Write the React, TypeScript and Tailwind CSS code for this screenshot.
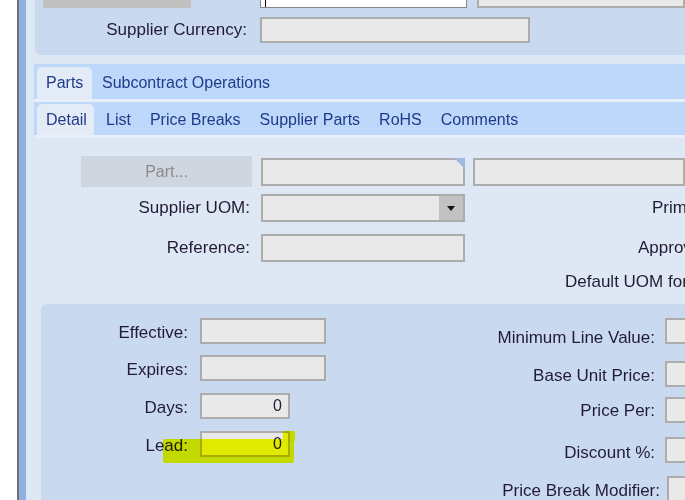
const field = 'border-2 border-[#acacac] bg-[#e9e9e9]';

const detailTabs = ['List', 'Price Breaks', 'Supplier Parts', 'RoHS', 'Comments'];

function Field({ w, value }: { w: string; value?: string }) {
  return (
    <div className={`flex h-[26px] shrink-0 items-center justify-end pr-[6px] text-[16px] ${w} ${field}`}>
      {value}
    </div>
  );
}

export default function App() {
  return (
    <div className="flex h-[500px] w-[685px] overflow-hidden bg-white font-['Liberation_Sans',Arial,sans-serif] text-[17px] text-[#221b36]">
      <div className="w-[17px] shrink-0 bg-white" />
      <div className="w-[2px] shrink-0 bg-[#6f6f6f]" />
      <div className="w-[7px] shrink-0 bg-[#8fb0e2]" />
      <div className="flex min-w-0 flex-1 flex-col overflow-hidden bg-[#dee8f5]">
        {/* supplier header panel */}
        <div className="ml-[9px] h-[55px] shrink-0 overflow-hidden rounded-bl-[6px] bg-[#c9daf0]">
          <div className="-mt-[20px] flex h-[28px] items-stretch">
            <div className="ml-[8px] w-[148px] shrink-0 bg-[#c0c0c0]" />
            <div className="ml-[69px] w-[207px] shrink-0 border border-[#8a8a8a] bg-white pl-[4px] pt-[16px]">
              <div className="h-[10px] w-[1px] bg-black" />
            </div>
            <div className={`ml-[10px] flex-1 ${field}`} />
          </div>
          <div className="mt-[9px] flex h-[26px] items-center">
            <span className="w-[212px] shrink-0 whitespace-nowrap text-right">Supplier Currency:</span>
            <div className={`ml-[13px] h-[26px] w-[270px] shrink-0 ${field}`} />
          </div>
        </div>

        {/* tab strips */}
        <div className="ml-[8px] mt-[9px] flex h-[35px] shrink-0 items-end bg-[#bdd8fb] text-[16px] text-[#1f3b8a]">
          <div className="ml-[3px] flex h-[32px] w-[55px] shrink-0 items-center rounded-t-[5px] bg-[#e3ebf6] pl-[9px]">Parts</div>
          <div className="ml-[10px] flex h-[32px] items-center whitespace-nowrap">Subcontract Operations</div>
        </div>
        <div className="ml-[8px] h-[3px] shrink-0 bg-[#e8eff8]" />
        <div className="ml-[8px] flex h-[33px] shrink-0 items-end bg-[#bdd8fb] text-[16px] text-[#1f3b8a]">
          <div className="ml-[3px] flex h-[31px] w-[57px] shrink-0 items-center rounded-t-[5px] bg-[#e3ebf6] pl-[9px]">Detail</div>
          <div className="ml-[12px] flex h-[31px] items-center gap-[19px] whitespace-nowrap">
            {detailTabs.map((t) => (
              <span key={t}>{t}</span>
            ))}
          </div>
        </div>
        <div className="ml-[8px] h-[3px] shrink-0 bg-[#e8eff8]" />

        {/* part rows */}
        <div className="mt-[18px] flex h-[31px] shrink-0 items-center">
          <div className="ml-[55px] flex h-[31px] w-[171px] shrink-0 items-center justify-center bg-[#cfd6e0] text-[16px] text-[#8b8b8b]">
            Part...
          </div>
          <div className={`relative ml-[9px] h-[28px] w-[204px] shrink-0 ${field}`}>
            <svg className="absolute -right-[2px] -top-[2px]" width="11" height="11" viewBox="0 0 11 11">
              <polygon points="0,0 11,0 11,11" fill="#9fb8de" />
            </svg>
          </div>
          <div className={`ml-[8px] h-[28px] flex-1 ${field}`} />
        </div>
        <div className="mt-[7px] flex h-[28px] shrink-0 items-center whitespace-nowrap">
          <span className="w-[224px] shrink-0 text-right">Supplier UOM:</span>
          <div className={`ml-[11px] flex h-[28px] w-[204px] shrink-0 ${field}`}>
            <div className="flex-1" />
            <div className="flex w-[24px] items-center justify-center bg-[#c2c2c2]">
              <svg width="8" height="5" viewBox="0 0 8 5">
                <polygon points="0,0 8,0 4,5" fill="#111" />
              </svg>
            </div>
          </div>
          <span className="ml-[187px] shrink-0">Primary UOM:</span>
        </div>
        <div className="mt-[12px] flex h-[28px] shrink-0 items-center whitespace-nowrap">
          <span className="w-[224px] shrink-0 text-right">Reference:</span>
          <div className={`ml-[11px] h-[28px] w-[204px] shrink-0 ${field}`} />
          <span className="ml-[173px] shrink-0">Approved Supplier:</span>
        </div>
        <div className="mt-[8px] flex h-[24px] shrink-0 items-center whitespace-nowrap">
          <span className="ml-[539px] shrink-0">Default UOM for Supplier</span>
        </div>

        {/* price panel */}
        <div className="relative ml-[15px] mt-[10px] flex flex-1 rounded-tl-[6px] bg-[#c9daf0] pt-[14px] text-[17px]">
          <div className="flex w-[299px] shrink-0 flex-col">
            <div className="flex h-[26px] items-center">
              <span className="mt-[3px] w-[147px] text-right">Effective:</span>
              <div className="ml-[12px]"><Field w="w-[126px]" /></div>
            </div>
            <div className="mt-[11px] flex h-[26px] items-center">
              <span className="mt-[3px] w-[147px] text-right">Expires:</span>
              <div className="ml-[12px]"><Field w="w-[126px]" /></div>
            </div>
            <div className="mt-[12px] flex h-[26px] items-center">
              <span className="mt-[3px] w-[147px] text-right">Days:</span>
              <div className="ml-[12px]"><Field w="w-[90px]" value="0" /></div>
            </div>
            <div className="mt-[12px] flex h-[26px] items-center">
              <span className="mt-[3px] w-[147px] text-right">Lead:</span>
              <div className="ml-[12px]"><Field w="w-[90px]" value="0" /></div>
            </div>
          </div>
          <div className="flex min-w-0 flex-1 flex-col whitespace-nowrap">
            <div className="flex h-[26px] items-start">
              <span className="mt-[7px] w-[315px] shrink-0 text-right leading-[26px]">Minimum Line Value:</span>
              <div className="ml-[10px]"><Field w="w-[40px]" /></div>
            </div>
            <div className="mt-[17px] flex h-[26px] items-start">
              <span className="mt-[2px] w-[315px] shrink-0 text-right leading-[26px]">Base Unit Price:</span>
              <div className="ml-[10px]"><Field w="w-[40px]" /></div>
            </div>
            <div className="mt-[10px] flex h-[26px] items-start">
              <span className="mt-[1px] w-[315px] shrink-0 text-right leading-[26px]">Price Per:</span>
              <div className="ml-[10px]"><Field w="w-[40px]" /></div>
            </div>
            <div className="mt-[14px] flex h-[26px] items-start">
              <span className="mt-[3px] w-[315px] shrink-0 text-right leading-[26px]">Discount %:</span>
              <div className="ml-[10px]"><Field w="w-[40px]" /></div>
            </div>
            <div className="mt-[13px] flex h-[26px] items-start">
              <span className="mt-[2px] w-[320px] shrink-0 text-right leading-[26px]">Price Break Modifier:</span>
              <div className="ml-[7px]"><Field w="w-[40px]" /></div>
            </div>
          </div>
          {/* marker highlight */}
          <div className="pointer-events-none absolute left-[122px] top-[135px] h-[24px] w-[131px] rounded-[2px] bg-[#f6ff00] mix-blend-multiply" />
          <div className="pointer-events-none absolute left-[242px] top-[127px] h-[10px] w-[12px] bg-[#f6ff00] mix-blend-multiply" />
        </div>
      </div>
    </div>
  );
}
